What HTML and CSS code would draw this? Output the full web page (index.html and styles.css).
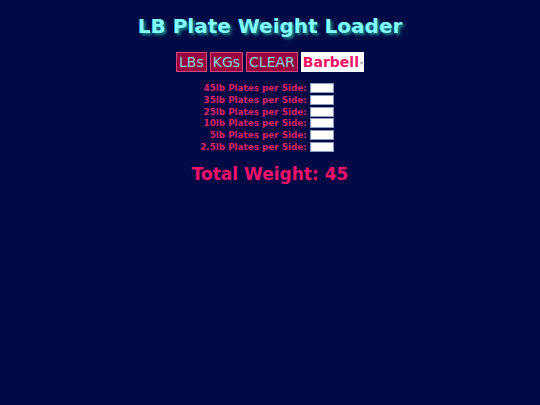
FILE: index.html
```html
<!DOCTYPE html>
<html>
<head>
<meta charset="utf-8">
<link rel="stylesheet" href="styles.css">
</head>
<body>
<div class="page">
  <h1 class="title">LB Plate Weight Loader</h1>
  <div class="controls">
    <button class="btn">LBs</button>
    <button class="btn">KGs</button>
    <button class="btn">CLEAR</button>
    <div class="select"><span>Barbell</span><span class="arrow">&#9662;</span></div>
  </div>
  <div class="plates">
    <div class="row"><label>45lb Plates per Side:</label><span class="input"></span></div>
    <div class="row"><label>35lb Plates per Side:</label><span class="input"></span></div>
    <div class="row"><label>25lb Plates per Side:</label><span class="input"></span></div>
    <div class="row"><label>10lb Plates per Side:</label><span class="input"></span></div>
    <div class="row"><label>5lb Plates per Side:</label><span class="input"></span></div>
    <div class="row"><label>2.5lb Plates per Side:</label><span class="input"></span></div>
  </div>
  <div class="total">Total Weight: 45</div>
</div>
</body>
</html>
```
FILE: styles.css
```css
html, body {
  margin: 0;
  padding: 0;
  background: #000b45;
  height: 100%;
}
body {
  font-family: "DejaVu Sans", Verdana, sans-serif;
}
.page {
  display: flex;
  flex-direction: column;
  align-items: center;
  padding-top: 14px;
}
.title {
  margin: 0;
  font-size: 20px;
  font-weight: bold;
  color: #80ffff;
  text-shadow: 2px 2px 3px #1f8f8f;
  line-height: 24px;
}
.controls {
  display: flex;
  gap: 3px;
  margin-top: 14px;
  align-items: center;
}
.btn {
  font-family: "DejaVu Sans", Verdana, sans-serif;
  font-size: 14px;
  color: #80d8d8;
  background: #990040;
  border: 1px solid #d9457a;
  padding: 0 2px;
  height: 20px;
  line-height: 18px;
  margin: 0;
}
.select {
  background: #fff;
  height: 20px;
  display: flex;
  align-items: center;
  padding: 0 1px 0 2px;
  color: #ee1166;
  font-weight: bold;
  font-size: 14px;
}
.arrow {
  font-size: 6px;
  color: #999;
  margin-left: 1px;
  font-weight: normal;
}
.plates {
  margin-top: 11px;
  display: flex;
  flex-direction: column;
  gap: 1.75px;
  transform: translateX(-3px);
}
.row {
  display: flex;
  justify-content: flex-end;
  align-items: center;
  height: 10px;
  gap: 3px;
}
.row label {
  font-size: 8.8px;
  font-weight: bold;
  color: #dd2266;
}
.input {
  width: 22px;
  height: 8px;
  background: #fff;
  border: 1px solid #8899bb;
}
.total {
  margin-top: 12px;
  font-size: 17px;
  font-weight: bold;
  color: #f0106a;
}
```
